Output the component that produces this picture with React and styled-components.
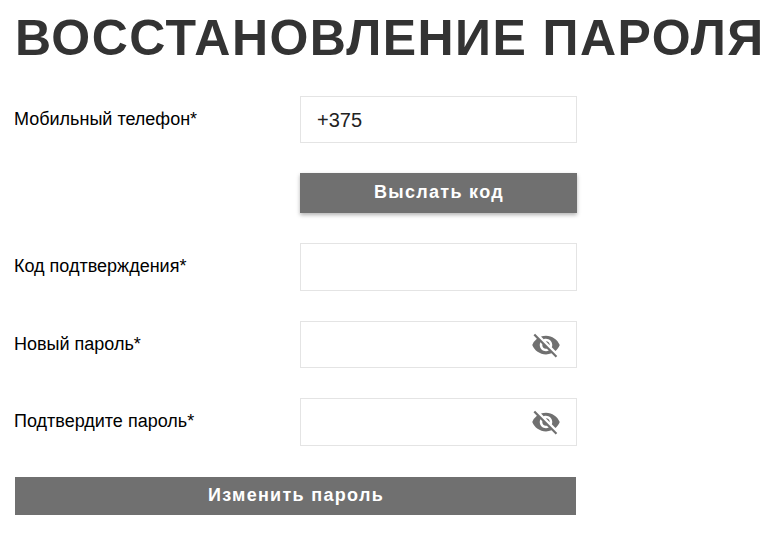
import React from "react";
import styled, { createGlobalStyle } from "styled-components";
import { MdVisibilityOff } from "react-icons/md";

const GlobalStyle = createGlobalStyle`
  body {
    margin: 0;
    background: #fff;
    font-family: "Liberation Sans", Arial, sans-serif;
  }
`;

export default function App() {
  return (
    <>
      <GlobalStyle />
      <Page>
        <Title>Восстановление пароля</Title>
        <Form>
          <Row>
            <Label>Мобильный телефон*</Label>
            <InputBox>
              <Input defaultValue="+375" />
            </InputBox>
          </Row>
          <SendRow>
            <SendButton>Выслать код</SendButton>
          </SendRow>
          <Row>
            <Label>Код подтверждения*</Label>
            <InputBox>
              <Input />
            </InputBox>
          </Row>
          <Row>
            <Label>Новый пароль*</Label>
            <InputBox>
              <Input type="password" />
              <EyeIcon />
            </InputBox>
          </Row>
          <Row>
            <Label>Подтвердите пароль*</Label>
            <InputBox>
              <Input type="password" />
              <EyeIcon />
            </InputBox>
          </Row>
          <SubmitButton>Изменить пароль</SubmitButton>
        </Form>
      </Page>
    </>
  );
}

const Page = styled.div`
  width: 768px;
  height: 533px;
  overflow: hidden;
  box-sizing: border-box;
  padding: 9px 0 0 15px;
`;

const Title = styled.h1`
  margin: 0;
  font-size: 50px;
  line-height: 58px;
  font-weight: 700;
  letter-spacing: 1.45px;
  text-transform: uppercase;
  color: #333;
  white-space: nowrap;
`;

const Form = styled.div`
  display: flex;
  flex-direction: column;
  margin-top: 28.6px;
`;

const Row = styled.div`
  display: flex;
  align-items: flex-start;
  margin-bottom: 30px;

  &:nth-last-child(2) {
    margin-bottom: 31.4px;
  }
`;

const SendRow = styled.div`
  padding-left: 285px;
  margin-bottom: 30px;
`;

const Label = styled.label`
  width: 285px;
  margin-left: -1px;
  margin-right: 1px;
  padding-top: 13px;
  font-size: 18px;
  line-height: 20px;
  color: #000;
`;

const InputBox = styled.div`
  position: relative;
  display: flex;
  align-items: center;
  box-sizing: border-box;
  width: 277px;
  height: 47.5px;
  border: 1px solid #e4e4e4;
  background: #fff;
`;

const Input = styled.input`
  flex: 1;
  min-width: 0;
  height: 100%;
  box-sizing: border-box;
  padding: 2px 16px 0;
  border: none;
  outline: none;
  background: transparent;
  font-family: "Liberation Sans", Arial, sans-serif;
  font-size: 20px;
  color: #222;
`;

const EyeIcon = styled(MdVisibilityOff)`
  position: absolute;
  right: 15px;
  top: 8px;
  width: 30px;
  height: 30px;
  color: #707070;
`;

const SendButton = styled.button`
  display: block;
  width: 277px;
  height: 40px;
  padding: 0 0 2px 1px;
  border: none;
  background: #707070;
  box-shadow: 0 2px 4px rgba(0, 0, 0, 0.3);
  color: #fff;
  font-family: "Liberation Sans", Arial, sans-serif;
  font-size: 18px;
  font-weight: 700;
  letter-spacing: 1.3px;
`;

const SubmitButton = styled(SendButton)`
  width: 561px;
  height: 38px;
  padding: 0 0 1px 1px;
  box-shadow: none;
`;
